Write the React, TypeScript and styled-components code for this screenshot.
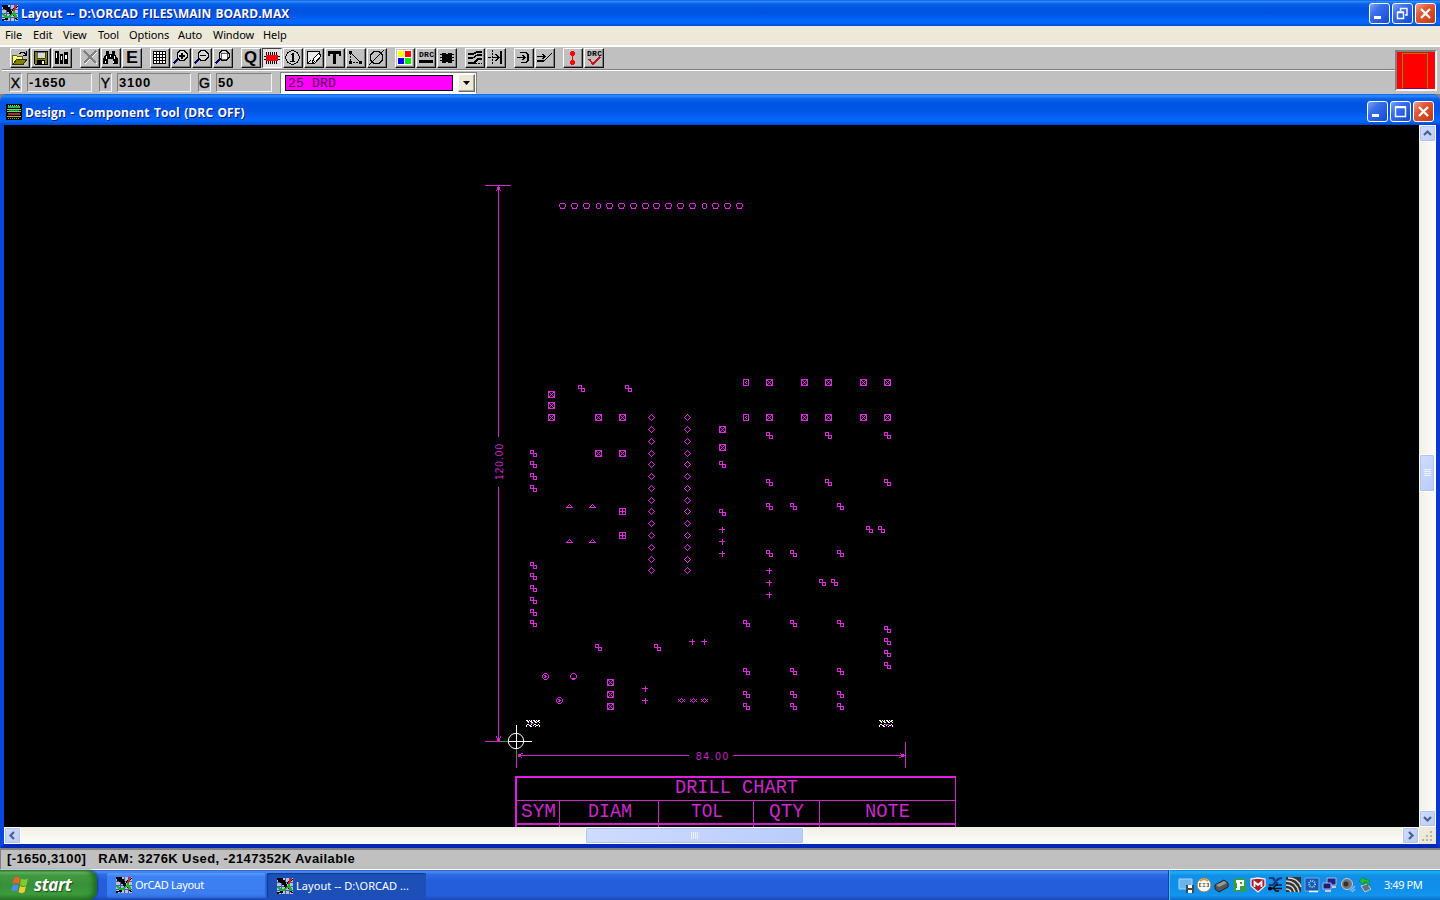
import React from "react";
import styled, { createGlobalStyle, css } from "styled-components";

const GlobalStyle = createGlobalStyle`
  * { box-sizing: border-box; }
  body { margin: 0; overflow: hidden; background: #c0c0c0; }
  svg { display: block; flex: none; }
`;

const ui = `"Noto Sans", Tahoma, sans-serif`;

const Desktop = styled.div`
  width: 1440px;
  height: 900px;
  display: flex;
  flex-direction: column;
  overflow: hidden;
  background: #c0c0c0;
  font-family: ${ui};
  white-space: nowrap;
`;

const titleGradient =
  "linear-gradient(#0a5fe8 0, #2f8bff 6%, #0a62ea 15%, #0054e3 30%, #0055e5 55%, #0566fb 80%, #0264f8 90%, #0047c8 100%)";

const TitleBar = styled.div<{ $child?: boolean }>`
  height: ${(p) => (p.$child ? 31 : 26)}px;
  flex: none;
  display: flex;
  align-items: center;
  padding: ${(p) => (p.$child ? "4px 6px 0 6px" : "0 4px 0 2px")};
  background: ${titleGradient};
  border-radius: ${(p) => (p.$child ? "7px 7px 0 0" : "0")};
`;

const TitleText = styled.span<{ $spacing: number; $word: number }>`
  flex: 1;
  margin-left: 3px;
  padding-top: 1px;
  color: #fff;
  font: bold 12px "Open Sans", sans-serif;
  letter-spacing: ${(p) => p.$spacing}px;
  word-spacing: ${(p) => p.$word}px;
  text-shadow: 1px 1px 0 #0a1883;
`;

const Buttons = styled.div`
  display: flex;
  gap: 2px;
`;

const CaptionButton = styled.div<{ $close?: boolean }>`
  width: 21px;
  height: 21px;
  border: 1px solid #fff;
  border-radius: 3px;
  background: ${(p) =>
    p.$close
      ? "linear-gradient(135deg, #f0a088 0, #e05a35 35%, #cf4420 75%, #b8381a)"
      : "linear-gradient(135deg, #7da4f5 0, #3a6ee8 35%, #2058e0 75%, #1a48c0)"};
`;

const MenuBar = styled.div`
  height: 21px;
  flex: none;
  display: flex;
  padding-left: 5px;
  background: #ece9d8;
  border-bottom: 2px solid #fff;
`;

const MenuItem = styled.span<{ $w: number }>`
  width: ${(p) => p.$w}px;
  font: 11px/18px ${ui};
  letter-spacing: -0.1px;
  color: #000;
`;

const ToolArea = styled.div`
  height: 47px;
  flex: none;
  display: flex;
  background: #c0c0c0;
  padding-left: 2px;
`;

const ToolRows = styled.div`
  flex: 1;
  display: flex;
  flex-direction: column;
`;

const ToolRow = styled.div`
  height: 24px;
  display: flex;
  gap: 8px;
  padding: 1px 0 0 8px;
  border-bottom: 1px solid #fff;
  box-shadow: inset 0 -1px #808080;
`;

const ToolGroup = styled.div`
  display: flex;
  gap: 1px;
`;

const ToolButton = styled.div<{ $pressed?: boolean }>`
  width: 20px;
  height: 20px;
  background: ${(p) => (p.$pressed ? "#e2e2e2" : "#c0c0c0")};
  border: 1px solid;
  border-color: ${(p) => (p.$pressed ? "#404040 #fff #fff #404040" : "#fff #111 #111 #fff")};
  ${(p) => !p.$pressed && css`box-shadow: inset -1px -1px #808080;`}
`;

const ToolSvg = styled.svg`
  overflow: visible;
`;

const FieldRow = styled.div`
  height: 23px;
  display: flex;
  padding: 2px 0 0 7px;
`;

const Sunken = styled.div<{ $w: number; $gap: number; $plain?: boolean }>`
  width: ${(p) => p.$w}px;
  height: 19px;
  margin-right: ${(p) => p.$gap}px;
  padding-left: ${(p) => (p.$plain ? 0 : 1)}px;
  border: 1px solid;
  border-color: #808080 #f4f4f4 #f4f4f4 #808080;
  color: #000;
  font: ${(p) => (p.$plain ? "normal 14px/18px" : "bold 13px/18px")} "Liberation Sans", sans-serif;
  letter-spacing: ${(p) => (p.$plain ? 0 : 0.8)}px;
  -webkit-text-stroke: ${(p) => (p.$plain ? "0.4px #000" : "0")};
  display: flex;
  justify-content: ${(p) => (p.$plain ? "center" : "flex-start")};
`;

const Combo = styled.div`
  width: 197px;
  height: 22px;
  margin-top: -1px;
  display: flex;
  justify-content: space-between;
  background: #fff;
  border: 1px solid;
  border-color: #808080 #808080 #fff #808080;
  padding: 1px 1px 1px 4px;
`;

const LayerSwatch = styled.div`
  width: 168px;
  height: 16px;
  margin-top: 1px;
  background: #f0f;
  border: 1px solid #000;
  color: #4a004a;
  font: 13px/15px "Liberation Mono", monospace;
  letter-spacing: 0.2px;
  padding-left: 2px;
`;

const DropButton = styled.div`
  width: 17px;
  height: 18px;
  display: flex;
  align-items: center;
  justify-content: center;
  background: #ece9d8;
  border: 1px solid;
  border-color: #fff #716f64 #716f64 #fff;
  box-shadow: inset -1px -1px #aca899;
`;

const Postage = styled.div`
  width: 42px;
  height: 41px;
  margin: 3px 3px 0 0;
  background: #f00;
  border: 2px solid;
  border-color: #808080 #fff #fff #808080;
  padding: 1px 0 0 5px;
`;

const BoardOutline = styled.div`
  width: 26px;
  height: 36px;
  border: 1px solid #8a8a00;
  border-bottom-color: #800080;
`;

const ChildWindow = styled.div`
  height: 754px;
  flex: none;
  display: flex;
  flex-direction: column;
  background: #808080;
`;

const ChildBody = styled.div`
  flex: 1;
  display: flex;
  flex-direction: column;
  border: solid;
  border-width: 0 4px 4px 4px;
  border-color: #0a40dc #0a38d0 #0428b8 #0a48e0;
`;

const CanvasRow = styled.div`
  height: 702px;
  display: flex;
  background: #000;
`;

const VScroll = styled.div`
  width: 17px;
  height: 702px;
  display: flex;
  flex-direction: column;
  justify-content: space-between;
  background: linear-gradient(90deg, #f0efe6, #fefefb);
`;

const HScroll = styled.div`
  height: 17px;
  display: flex;
  background: linear-gradient(#f0efe6, #fefefb);
`;

const ScrollPiece = styled.div<{ $w: number; $h: number }>`
  width: ${(p) => p.$w}px;
  height: ${(p) => p.$h}px;
  flex: none;
  display: flex;
  align-items: center;
  justify-content: center;
  border: 1px solid #fff;
  border-radius: 2px;
  box-shadow: inset 0 0 0 1px #b0c4f4, inset -1px -1px #98b0e4;
  background: linear-gradient(135deg, #cfdcff, #b9ccfb);
`;

const HGap = styled.div<{ $w: number }>`
  width: ${(p) => p.$w}px;
  flex: none;
`;

const Grip = styled.div`
  width: 17px;
  height: 17px;
  padding: 3px 0 0 3px;
  background: #ece9d8;
`;

const StatusBar = styled.div`
  height: 22px;
  flex: none;
  display: flex;
  gap: 12px;
  padding-left: 6px;
  border-top: 2px solid #808080;
  border-left: 1px solid #808080;
  border-bottom: 1px solid #fff;
  background: #c0c0c0;
  color: #000;
  font: bold 13px/17px "Liberation Sans", sans-serif;
  letter-spacing: 0.4px;
`;

const TaskBar = styled.div`
  height: 30px;
  flex: none;
  display: flex;
  background: linear-gradient(#2a5cc8 0, #4a8cf4 6%, #2f6de4 14%, #245edb 35%, #245edb 85%, #1a48b8 100%);
`;

const StartButton = styled.div`
  width: 97px;
  height: 30px;
  display: flex;
  align-items: center;
  padding: 0 0 1px 11px;
  gap: 4px;
  border-radius: 0 9px 9px 0;
  background: linear-gradient(#2a7a2a 0, #6cba6c 7%, #409a40 18%, #389038 50%, #3c9c3c 80%, #2c782c 100%);
  box-shadow: inset -4px 0 5px #1f6a1f, 1px 0 2px #123c9c;
  color: #fff;
  font: italic bold 17px "Open Sans", sans-serif;
  letter-spacing: -0.4px;
  text-shadow: 1px 1px 1px #1a4a1a;
`;

const Tasks = styled.div`
  flex: 1;
  display: flex;
  gap: 1px;
  padding: 3px 0 0 10px;
`;

const Task = styled.div<{ $active?: boolean }>`
  width: 159px;
  height: 25px;
  display: flex;
  align-items: center;
  gap: 3px;
  padding: ${(p) => (p.$active ? "0 0 0 10px" : "0 0 2px 9px")};
  border-radius: 2px;
  color: #fff;
  font-size: 11px;
  letter-spacing: ${(p) => (p.$active ? 0.05 : -0.35)}px;
  background: ${(p) => (p.$active ? "#1c50b6" : "linear-gradient(#5a9afc 0, #3c81f3 15%, #3a7df0 85%, #2f6ad8)")};
  box-shadow: ${(p) => (p.$active ? "inset 1px 1px 1px #123a88" : "inset -1px -1px #2e68d8")};
`;

const Tray = styled.div`
  width: 272px;
  display: flex;
  align-items: center;
  gap: 2px;
  padding-left: 9px;
  border-left: 1px solid #0d4090;
  background: linear-gradient(#0c78d0 0, #1fb0f8 6%, #1290e8 18%, #0f8fea 60%, #1295ee 85%, #0c6cc8 100%);
  box-shadow: inset 1px 0 #35c0ff;
  color: #fff;
  font-size: 11px;
`;

const Clock = styled.span`
  margin: 0 0 2px 8px;
  letter-spacing: -0.45px;
`;

function AppIcon() {
  return (
    <svg width="16" height="16" viewBox="0 0 16 16" shapeRendering="crispEdges">
      <rect width="16" height="16" fill="#b8c0d8" />
      <path d="M0 4.500h16M0 8.500h16M0 12.500h16M4.500 0v16M8.500 0v16M12.500 0v16" stroke="#4858b0" />
      <path d="M0 0h6v2h2v2h1v2h1v3H7V7H5V5H3V4H1V2H0z" fill="#000" />
      <path d="M0 15l5-1 4-5 3 1 3 5M15 1l-5 5" stroke="#000" strokeWidth="1.600" fill="none" />
      <path d="M14.500 0l-3 6 1 4 2 3" stroke="#e02020" strokeWidth="2" fill="none" />
      <path d="M1 9l3 3h3l5-4 2 3v2M11 7h2" stroke="#10b830" strokeWidth="2" fill="none" />
    </svg>
  );
}

function ChipIcon() {
  return (
    <svg width="16" height="16" viewBox="0 0 16 16" shapeRendering="crispEdges">
      <rect width="16" height="16" fill="#000" />
      <path d="M2 2h12v2H2z" fill="#30b050" />
      <path d="M1 5.500h14M1 7.500h14" stroke="#60e070" strokeWidth="1" />
      <path d="M3 6.500h10" stroke="#208040" />
      <path d="M2 9h12v2H2z" fill="#a83028" />
      <path d="M1 12.500h14" stroke="#c0b830" />
      <path d="M2 14.500h12" stroke="#58c050" strokeDasharray="1 1" />
      <path d="M2.500 1v1M4.500 1v1M6.500 1v1M8.500 1v1M10.500 1v1M12.500 1v1" stroke="#60f080" />
    </svg>
  );
}

type CaptionKind = "min" | "max" | "restore" | "close";
function Caption({ kind }: { kind: CaptionKind }) {
  return (
    <CaptionButton $close={kind === "close"}>
      <svg width="19" height="19" viewBox="0 0 19 19" fill="none" stroke="#fff">
        {kind === "min" && <path d="M4 13.500h7" strokeWidth="3" />}
        {kind === "max" && <path d="M4.500 5.500h10v9h-10z" strokeWidth="1.400" />}
        {kind === "max" && <path d="M4 5h11" strokeWidth="2" />}
        {kind === "restore" && <path d="M4.500 8.500h6v6h-6zM4 8h7M7.500 7V4.500h6.500v6.500h-2M7 4.500h7" strokeWidth="1.400" />}
        {kind === "close" && <path d="M5 5l9 9M14 5l-9 9" strokeWidth="2.300" />}
      </svg>
    </CaptionButton>
  );
}

const magnifier = (inner: React.ReactNode) => (
  <>
    <path d="M8 1.500h4l3 3v4l-3 3H8l-3-3v-4z" fill="#d8d8d8" stroke="#000" />
    <path d="M5.500 10.500l-4 4" stroke="#000060" strokeWidth="2.400" />
    {inner}
  </>
);

const toolIcons: Record<string, React.ReactNode> = {
  open: (
    <>
      <path d="M1.500 14.500v-8h4l1 1h5v3h4l-3 4z" fill="#ffff80" stroke="#606000" />
      <path d="M2 15l4-5h10l-3.500 5z" fill="#808000" stroke="#303000" />
      <path d="M8 4.500h1l1-1h3l2 2M15.500 2v4.500h-4" fill="none" stroke="#000" />
    </>
  ),
  save: (
    <>
      <path d="M2.500 2.500h13v13h-12l-1-1z" fill="#808000" stroke="#000" />
      <path d="M5 3h8v6H5z" fill="#d8d8d8" stroke="#000" strokeWidth=".5" />
      <path d="M5 11h8v4H5z" fill="#000" />
      <path d="M10 12h2v3h-2z" fill="#fff" />
    </>
  ),
  lib: (
    <>
      <path d="M2 2h4v13H2zM7 5h3v10H7zM11 3h4v12h-4z" fill="#000" />
      <path d="M3 4h1v5H3zM8 7h1v4H8zM12 6h2v4h-2z" fill="#fff" />
    </>
  ),
  cut: (
    <>
      <path d="M4 3l12 12M16 3L4 15" stroke="#fff" />
      <path d="M3 2l12 12M15 2L3 14" stroke="#808080" strokeWidth="1.500" />
    </>
  ),
  find: (
    <>
      <path d="M4 2h3v3h3V2h3v3l3 5v5h-5v-5H6v5H1v-5l3-5z" fill="#000" />
      <path d="M4.500 7v3M12.500 7v3M8.500 6v2M3.500 12v2M11.500 12v2" stroke="#fff" />
    </>
  ),
  edit: (
    <text x="3" y="14" fontSize="16" fontFamily="Liberation Sans, sans-serif" fontWeight="bold" textLength="12" lengthAdjust="spacingAndGlyphs">E</text>
  ),
  grid: (
    <>
      <path d="M2 2h13v13H2z" fill="#fff" />
      <path d="M2.500 2v13M5.500 2v13M8.500 2v13M11.500 2v13M14.500 2v13M2 2.500h13M2 5.500h13M2 8.500h13M2 11.500h13M2 14.500h13" stroke="#000" />
    </>
  ),
  zin: magnifier(<path d="M7 6.500h6M10 3.500v6" stroke="#000" strokeWidth="2" />),
  zout: magnifier(<path d="M7 6.500h6" stroke="#000" strokeWidth="1.600" />),
  zall: magnifier(<path d="M7 4h6v6H7z" fill="#fff" stroke="#000" strokeWidth=".6" />),
  query: (
    <text x="2" y="14" fontSize="16" fontFamily="Liberation Sans, sans-serif" fontWeight="bold" textLength="13" lengthAdjust="spacingAndGlyphs">Q</text>
  ),
  chip: (
    <>
      <path d="M3.500 3v12M5.500 3v12M7.500 3v12M9.500 3v12M11.500 3v12M13.500 3v12" stroke="#000" />
      <path d="M3 6h12v6H3z" fill="#f00" />
      <path d="M1 7.500h2M1 10.500h2M15 7.500h2M15 10.500h2" stroke="#000" />
    </>
  ),
  pin: (
    <>
      <circle cx="8.500" cy="8.500" r="6.800" fill="#d0d0d0" stroke="#000" />
      <path d="M6.500 5.500h2M6 12.500h5" stroke="#000" fill="none" />
      <path d="M8 4h2v9H8z" fill="#000" />
    </>
  ),
  obst: (
    <>
      <path d="M2.500 2.500h12v7l-5 5h-7z" fill="#e8e8e8" stroke="#000" />
      <path d="M13.500 4.500l-5 5-1 4 3-1 5-5v-2z" fill="#fff" stroke="#000" />
      <path d="M3 14l3-3" stroke="#000" />
    </>
  ),
  text: <path d="M2 2h13v5h-2V5h-3v10H7V5H4v2H2z" fill="#000" />,
  conn: (
    <>
      <path d="M3.500 4v9.500H14" stroke="#000" fill="none" strokeDasharray="2 1" />
      <path d="M4 4l9 9" stroke="#000" />
      <path d="M2 2h3v3H2zM2 12h3v3H2zM12 12h3v3h-3z" fill="#000" />
    </>
  ),
  err: (
    <>
      <path d="M6 2.500h5l3.500 3.500v5L11 14.500H6L2.500 11V6z" fill="none" stroke="#000" />
      <path d="M1 16L16 1" stroke="#000" />
    </>
  ),
  color: (
    <>
      <path d="M1 1h15v15H1z" fill="#fff" />
      <path d="M2 2h6v6H2z" fill="#ff0" />
      <path d="M9 2h6v6H9z" fill="#f00" />
      <path d="M2 9h6v6H2z" fill="#00f" />
      <path d="M9 9h6v6H9z" fill="#0e0" />
    </>
  ),
  drcbar: (
    <>
      <text x="2" y="8" fontSize="8" fontFamily="Liberation Mono, monospace" fontWeight="bold" textLength="15">DRC</text>
      <path d="M2 11h14v3H2z" fill="#000" />
    </>
  ),
  reconn: (
    <>
      <path d="M4 4h4v1h2V4h4v10h-4v-1H8v1H4z" fill="#000" />
      <path d="M2 5.500h14M2 8.500h14M2 11.500h14" stroke="#000" strokeWidth="1.600" />
    </>
  ),
  auto1: (
    <>
      <path d="M2 5h5l4-2h5M2 14h6l4-4h4" stroke="#000" strokeWidth="2" fill="none" />
      <path d="M2 9h5l4-3h5" stroke="#000" fill="none" strokeWidth="1.300" />
      <path d="M9 14.500h7" stroke="#000" strokeDasharray="2 1" />
    </>
  ),
  auto2: (
    <>
      <path d="M5.500 1v15" stroke="#000" strokeDasharray="2 1" />
      <path d="M1 8.500h3M6 8.500h7M9 5l3 3.500L9 12" stroke="#000" fill="none" strokeWidth="1.400" />
      <path d="M13 2h2v13h-2z" fill="#000" />
    </>
  ),
  route1: (
    <path d="M5 3.500h6l2 2v6l-2 2H6M2 8.500h8M7 6l3 2.500L7 11" stroke="#000" fill="none" strokeWidth="1.300" />
  ),
  route2: (
    <path d="M1 7.500h8M6 5l3 2.500L6 10M1 12h7l8-8" stroke="#000" fill="none" strokeWidth="1.400" />
  ),
  shove: (
    <>
      <path d="M8 4h1v10H8z" fill="#f00" />
      <path d="M7 2h3v1h1v3h-1v1H7V6H6V3h1zM7 11h3v1h1v3h-1v1H7v-1H6v-3h1z" fill="#f00" />
    </>
  ),
  drccheck: (
    <>
      <text x="2" y="7" fontSize="8" fontFamily="Liberation Mono, monospace" fontWeight="bold" textLength="15">DRC</text>
      <path d="M4 10l4 5 7-7" stroke="#c01818" strokeWidth="2" fill="none" />
    </>
  ),
};

const toolGroups = [
  ["open", "save", "lib"],
  ["cut", "find", "edit"],
  ["grid", "zin", "zout", "zall"],
  ["query", "chip", "pin", "obst", "text", "conn", "err"],
  ["color", "drcbar", "reconn"],
  ["auto1", "auto2"],
  ["route1", "route2"],
  ["shove", "drccheck"],
];

type Pt = [number, number];
const cross = (xs: number[], ys: number[]): Pt[] => ys.flatMap((y) => xs.map((x): Pt => [x, y]));

const drills: { d: string; at: Pt[] }[] = [
  {
    // boxed cross
    d: "M-2.500-2.500h6v6h-6zM-2-1.500h1M2-1.500h1M-1-0.500h1M1-0.500h1M0 0.500h1M-1 1.500h1M1 1.500h1M-2 2.500h1M2 2.500h1",
    at: [
      ...cross([551], [394, 405, 417]),
      ...cross([598, 622], [417, 453]),
      [722, 429], [722, 447],
      ...cross([769, 804, 828, 863, 887], [382, 417]),
      ...cross([610], [682, 694, 706]),
    ],
  },
  {
    // narrow boxed cross
    d: "M-2.500-2.500h5v6h-5zM0-0.500h1M-1 0.500h1M0 1.500h1M-0.500 0v1",
    at: [[746, 382], [746, 417]],
  },
  {
    // twin squares
    d: "M-2.500-2.500h3v3h-3zM0.500 0.500h3v3h-3z",
    at: [
      [581, 388], [628, 388], [722, 464], [722, 512],
      ...cross([533], [453, 464, 476, 488, 565, 576, 588, 600, 612, 623]),
      ...cross([769, 828, 887], [435, 482]),
      ...cross([769, 793, 840], [506, 553]),
      [869, 529], [881, 529], [822, 582], [834, 582],
      [598, 647], [657, 647],
      ...cross([746, 793, 840], [623, 671, 694, 706]),
      ...cross([887], [629, 641, 653, 665]),
    ],
  },
  {
    // boxed plus
    d: "M-2.500-2.500h6v6h-6zM-2 0.500h6M0.500-2v6",
    at: [[622, 511], [622, 535]],
  },
  {
    // plus
    d: "M-3 0.500h6M0.500-2v6",
    at: [
      ...cross([722], [529, 541, 553]),
      ...cross([769], [570, 582, 594]),
      ...cross([645], [688, 700]),
      [692, 641], [704, 641],
    ],
  },
  {
    // flat triangle
    d: "M-3 1.500h7M-2 0.500h1M-1-0.500h1M0-1.500h1M1-0.500h1M2 0.500h1",
    at: cross([569, 592], [506, 541]),
  },
  {
    // ring
    d: "M-2-1.500h5M-2.500-1v3M3.500-1v3M-2 2.500h1M2 2.500h1M-2 3.500h5",
    at: cross([562, 574, 586, 609, 621, 633, 645, 656, 668, 680, 692, 715, 727, 739], [205]),
  },
  {
    // narrow ring
    d: "M-1-1.500h3M-1.500-1v4M2.500-1v4M-1 3.500h3",
    at: [[598, 205], [704, 205]],
  },
  {
    // marked rings
    d: "M-1-2.500h3M-2.500-1v3M3.500-1v3M-1 3.500h3M-2-1.500h1M2-1.500h1M-2 2.500h1M2 2.500h1M-1-0.500h2M0 0.500h2M-1 1.500h2",
    at: [[545, 676], [559, 700]],
  },
  {
    d: "M-1-2.500h3M-2.500-1v3M3.500-1v3M-1 3.500h3M-2-1.500h1M2-1.500h1M-2 2.500h5",
    at: [[573, 676]],
  },
  {
    // bow
    d: "M-3-0.500h1M-2 0.500h1M-3 1.500h1M-1-0.500h1M0-1.500h1M1-0.500h1M0 2.500h1M-1 1.500h1M1 1.500h1M2 0.500h1M3-0.500h1M3 1.500h1",
    at: [[681, 700], [693, 700], [704, 700]],
  },
  {
    // diamond outline, one pixel per step
    d: "M-3 0.500h1M-2-0.500h1M-1-1.500h1M0-2.500h1M1-1.500h1M2-0.500h1M3 0.500h1M2 1.500h1M1 2.500h1M0 3.500h1M-1 2.500h1M-2 1.500h1",
    at: cross([651, 687], [417, 429, 441, 453, 464, 476, 488, 500, 511, 523, 535, 547, 559, 570]),
  },
];

const chartText: [string, number, number, number][] = [
  ["DRILL\u00a0CHART", 675, 793, 123],
  ["SYM", 521, 817, 35],
  ["DIAM", 588, 817, 44],
  ["TOL", 691, 817, 32],
  ["QTY", 769, 817, 35],
  ["NOTE", 865, 817, 45],
];

function Board() {
  return (
    <svg width="1415" height="702" viewBox="4 125 1415 702">
      <g fill="none" stroke="#cc28cc" strokeWidth="1" shapeRendering="crispEdges">
        <path d="M485 185.500h26M498.500 186v251M498.500 487v253M485 741.500h15M516.500 758v10M518 755.500h171M733 755.500h172M905.500 742v26" />
        <path d="M516 800.500h440M955.500 777v50M559.500 801v26M658.500 801v26M753.500 801v26M819.500 801v26" />
        <path d="M515 777h441M516 776v51" stroke="#e41ce4" strokeWidth="2" />
        <path d="M516 824h440" stroke="#d020d0" strokeWidth="2" />
        <path d="M497 187h3v3h-3zM497 738h3v3h-3zM518 754h3v3h-3zM901 754h3v3h-3z" stroke="none" fill="#d828d8" />
        <path d="M496 190.500h1M500 190.500h1M496 736.500h1M500 736.500h1M496 737.500h1M500 737.500h1M521 753.500h2M521 757.500h1M900 753.500h1M899 757.500h2" />
        {drills.map((s, i) => s.at.map(([x, y]) => <path key={`${i}-${x}-${y}`} d={s.d} transform={`translate(${x} ${y})`} stroke="#dc2cdc" />))}
      </g>
      <g fill="none" shapeRendering="crispEdges">
        <path d="M500 741.500h9M516.500 741v17" stroke="#30a030" />
        <path d="M508 741.500h24M516.500 725v24" stroke="#fff" />
        {[526, 879].map((x) => (
          <path
            key={x}
            transform={`translate(${x} 720)`}
            d="M0 .5h2M3 .5h1M5 .5h1M7 .5h2M10 .5h1M12 .5h2M1 1.500h2M4 1.500h2M8 1.500h2M11 1.500h2M2 2.500h1M5 2.500h2M9 2.500h2M13 2.500h1M1 4.500h2M5 4.500h1M8 4.500h2M12 4.500h1M0 5.500h1M3 5.500h2M7 5.500h1M10 5.500h2M13 5.500h1M0 6.500h1M4 6.500h2M9 6.500h1M13 6.500h1"
            stroke="#fff"
          />
        ))}
        <path d="M531 723.500h3M885 724.500h4" stroke="#d020d0" />
      </g>
      <circle cx="516" cy="741" r="7.700" fill="none" stroke="#fff" />
      <g fill="#cc28cc">
        {chartText.map(([t, x, y, w]) => (
          <text key={t} x={x} y={y} fontSize="19.500" textLength={w} lengthAdjust="spacingAndGlyphs" fontFamily="Liberation Mono, monospace">{t}</text>
        ))}
        <text x="696" y="760" fontSize="10" textLength="32" fontFamily="Liberation Sans, sans-serif">84.00</text>
        <text transform="translate(503 480) rotate(-90)" fontSize="10" textLength="36" fontFamily="Liberation Sans, sans-serif">120.00</text>
      </g>
    </svg>
  );
}

function Arrow({ dir }: { dir: "up" | "down" | "left" | "right" }) {
  const d = { up: "M1 6l3.500-3.500L8 6", down: "M1 3l3.500 3.500L8 3", left: "M6 1L2.500 4.500 6 8", right: "M3 1l3.500 3.500L3 8" }[dir];
  return (
    <ScrollPiece $w={17} $h={17}>
      <svg width="9" height="9"><path d={d} fill="none" stroke="#4d6185" strokeWidth="2.200" /></svg>
    </ScrollPiece>
  );
}

const VThumb = styled.div`
  flex: 1;
  padding-top: 312px;
`;

const trayIcons: React.ReactNode[] = [
  <><path d="M1 2h13v10H1z" fill="#6ab4ec" stroke="#a8d4f8" /><path d="M8 8h8v8H8z" fill="#404850" /><path d="M10 8h4v3h-4zM10 13h4v3h-4z" fill="#fff" /></>,
  <><circle cx="8" cy="8" r="7" fill="#f8f8f0" stroke="#908050" /><path d="M4 4q4-3 8 0" stroke="#c0a030" fill="none" strokeWidth="1.600" /><path d="M3 6h10v4H3z" fill="#777" /><circle cx="6" cy="8" r="1.700" fill="#fff" /><circle cx="10" cy="8" r="1.700" fill="#fff" /></>,
  <><path d="M1 8l9-5 4 3v4l-9 5-4-3z" fill="#555" stroke="#222" /><path d="M2 8l8-4 3 2-8 4z" fill="#999" /></>,
  <><path d="M1 2l12-1 2 13-13 1z" fill="#35a03c" /><path d="M4 3h8v6H8v4H4v-2h1V6H4z" fill="#fff" /><path d="M8 5h2v2H8z" fill="#35a03c" /></>,
  <><path d="M1 2l7-1 7 1v7l-7 6-7-6z" fill="#b01828" stroke="#eee" strokeWidth="1.300" /><path d="M4.500 10V5L8 8l3.500-3v5" fill="none" stroke="#fff" strokeWidth="1.800" /></>,
  <><path d="M1 1h4l5 7h4M14 1l-4 1-5 6H1" stroke="#123a80" strokeWidth="2.200" fill="none" /><path d="M0 11.500h14M5 11l3 3h3M5 11l3-3h2" stroke="#111" strokeWidth="1.600" fill="none" /><circle cx="2" cy="11.500" r="2" /></>,
  <><path d="M0 0h15v15H0z" fill="#333" /><path d="M0 4q10 0 13 11M0 8q7 0 9 7M2 1q10 0 13 9M0 12q4 0 5 3" stroke="#d8d8d0" strokeWidth="1.500" fill="none" /></>,
  <><path d="M1 1h14v13H1z" fill="#1858b0" stroke="#70a8e0" /><circle cx="8" cy="7" r="3" fill="none" stroke="#90d0ff" strokeDasharray="1 1" strokeWidth="2" /><path d="M5 14.500h9" stroke="#fff" strokeWidth="1.500" /></>,
  <><path d="M5 1h9v7H5z" fill="#20208a" stroke="#b0b8e0" /><path d="M1 6h8v6H1z" fill="#1c1c70" stroke="#b0b8e0" /><path d="M3 14h6M10 10h4" stroke="#c8c8d8" strokeWidth="2" /></>,
  <><circle cx="7" cy="7" r="5.500" fill="#707478" stroke="#c8ccd0" /><circle cx="6" cy="7" r="2.500" fill="#333" /><path d="M10 14l5-5M12 15l3-3" stroke="#80b8ff" strokeWidth="1.500" /></>,
  <><path d="M3 9l6-2 4 5-6 3z" fill="#607080" stroke="#ccc" /><path d="M1 4l5-4v2l5 1v5L9 9V5L6 5v3z" fill="#20c030" stroke="#107818" strokeWidth=".5" /></>,
];

const menus: [string, number][] = [
  ["File", 28], ["Edit", 30], ["View", 35], ["Tool", 31], ["Options", 49], ["Auto", 35], ["Window", 50], ["Help", 40],
];

export default function App() {
  return (
    <Desktop>
      <GlobalStyle />
      <TitleBar>
        <AppIcon />
        <TitleText $spacing={0} $word={1.1}>Layout -- D:\ORCAD FILES\MAIN BOARD.MAX</TitleText>
        <Buttons>
          <Caption kind="min" />
          <Caption kind="restore" />
          <Caption kind="close" />
        </Buttons>
      </TitleBar>
      <MenuBar>
        {menus.map(([name, w]) => <MenuItem key={name} $w={w}>{name}</MenuItem>)}
      </MenuBar>
      <ToolArea>
        <ToolRows>
          <ToolRow>
            {toolGroups.map((group) => (
              <ToolGroup key={group[0]}>
                {group.map((name) => (
                  <ToolButton key={name} $pressed={name === "chip"}>
                    <ToolSvg width="17" height="17" viewBox="0 0 17 17" fill="none" shapeRendering="crispEdges">
                      <g fill="#000">{toolIcons[name]}</g>
                    </ToolSvg>
                  </ToolButton>
                ))}
              </ToolGroup>
            ))}
          </ToolRow>
          <FieldRow>
            <Sunken $w={13} $gap={5} $plain>X</Sunken>
            <Sunken $w={65} $gap={7}>-1650</Sunken>
            <Sunken $w={13} $gap={5} $plain>Y</Sunken>
            <Sunken $w={74} $gap={7}>3100</Sunken>
            <Sunken $w={13} $gap={5} $plain>G</Sunken>
            <Sunken $w={56} $gap={8}>50</Sunken>
            <Combo>
              <LayerSwatch>25 DRD</LayerSwatch>
              <DropButton>
                <svg width="7" height="4"><path d="M0 0h7L3.500 4z" /></svg>
              </DropButton>
            </Combo>
          </FieldRow>
        </ToolRows>
        <Postage><BoardOutline /></Postage>
      </ToolArea>
      <ChildWindow>
        <TitleBar $child>
          <ChipIcon />
          <TitleText $spacing={0.13} $word={1}>Design - Component Tool (DRC OFF)</TitleText>
          <Buttons>
            <Caption kind="min" />
            <Caption kind="max" />
            <Caption kind="close" />
          </Buttons>
        </TitleBar>
        <ChildBody>
          <CanvasRow>
            <Board />
            <VScroll>
              <Arrow dir="up" />
              <VThumb>
                <ScrollPiece $w={16} $h={38}>
                  <svg width="7" height="8" shapeRendering="crispEdges"><path d="M0 .5h7M0 2.500h7M0 4.500h7M0 6.500h7" stroke="#eef4fe" /></svg>
                </ScrollPiece>
              </VThumb>
              <Arrow dir="down" />
            </VScroll>
          </CanvasRow>
          <HScroll>
            <Arrow dir="left" />
            <HGap $w={564} />
            <ScrollPiece $w={219} $h={17}>
              <svg width="8" height="7" shapeRendering="crispEdges"><path d="M.5 0v7M2.500 0v7M4.500 0v7M6.500 0v7" stroke="#eef4fe" /></svg>
            </ScrollPiece>
            <HGap $w={598} />
            <Arrow dir="right" />
            <Grip>
              <svg width="12" height="12" fill="#b8b4a0"><path d="M8 1h2v2H8zM4 5h2v2H4zM8 5h2v2H8zM0 9h2v2H0zM4 9h2v2H4zM8 9h2v2H8z" /></svg>
            </Grip>
          </HScroll>
        </ChildBody>
      </ChildWindow>
      <StatusBar>
        <span>[-1650,3100]</span>
        <span>RAM: 3276K Used, -2147352K Available</span>
      </StatusBar>
      <TaskBar>
        <StartButton>
          <svg width="19" height="18" viewBox="0 0 19 18">
            <path d="M3 2q3-2 6 0L8 8Q5 6 1.500 8z" fill="#f0602c" />
            <path d="M10 2.500q3 2 7 0L15.500 9q-3 2-6.500 0z" fill="#80cc30" />
            <path d="M1.500 9.500q3-2 6 0L6 15.500q-3-2-6 0z" fill="#4a8cf0" />
            <path d="M9 10q3 2 6 0l-1.500 6q-3 2-6 0z" fill="#f8cc30" />
          </svg>
          start
        </StartButton>
        <Tasks>
          <Task><AppIcon />OrCAD Layout</Task>
          <Task $active><AppIcon />Layout -- D:\ORCAD ...</Task>
        </Tasks>
        <Tray>
          {trayIcons.map((icon, i) => <svg key={i} width="16" height="16" viewBox="0 0 16 16">{icon}</svg>)}
          <Clock>3:49 PM</Clock>
        </Tray>
      </TaskBar>
    </Desktop>
  );
}
